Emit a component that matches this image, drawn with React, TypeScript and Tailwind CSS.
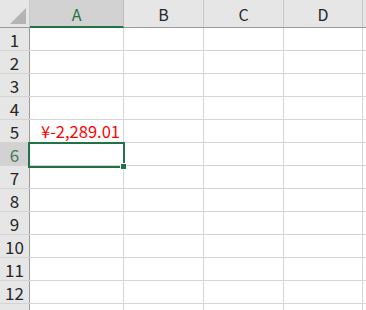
import React from "react";

const cols = [
  { label: "A", w: "w-[94px]", sel: true },
  { label: "B", w: "w-[80px]", sel: false },
  { label: "C", w: "w-[80px]", sel: false },
  { label: "D", w: "w-[79px]", sel: false },
];

const rows = Array.from({ length: 13 }, (_, i) => i + 1);

export default function App() {
  return (
    <div
      className="relative w-[366px] h-[310px] overflow-hidden bg-white"
      style={{ fontFamily: '"Noto Sans CJK SC", "Noto Sans", sans-serif' }}
    >
      {/* header row */}
      <div className="flex h-[28px] bg-[#e6e6e6] border-b border-[#9b9b9b]">
        <div className="w-[30px] shrink-0 border-r border-[#c8c8c8] relative">
          <svg className="absolute right-[3px] bottom-[3px]" width="16" height="16" viewBox="0 0 16 16">
            <polygon points="16,0 16,16 0,16" fill="#b4b4b4" />
          </svg>
        </div>
        {cols.map((c) => (
          <div
            key={c.label}
            className={`${c.w} shrink-0 flex items-center justify-center text-[16px] leading-none pt-[1px] border-r ${
              c.sel
                ? "bg-[#d2d2d2] text-[#217346] border-[#bdbdbd] border-b-[2px] border-b-[#217346] -mb-[1px]"
                : "text-[#262626] border-[#c8c8c8]"
            }`}
          >
            {c.label}
          </div>
        ))}
        <div className="flex-1" />
      </div>
      {rows.map((r) => (
        <div key={r} className="flex h-[23px] border-b border-[#d4d4d4]">
          <div
            className={`w-[30px] shrink-0 flex items-center justify-center text-[17px] leading-none border-r border-[#9b9b9b] ${
              r === 6 ? "bg-[#d2d2d2] text-[#3d7a5a]" : "bg-[#e6e6e6] text-[#262626]"
            }`}
          >
            {r <= 12 ? r : ""}
          </div>
          {cols.map((c) => (
            <div
              key={c.label}
              className={`${c.w} shrink-0 border-r border-[#d4d4d4] flex items-center justify-end pr-[3px] text-[16.5px] leading-none text-[#ff0000]`}
            >
              {r === 5 && c.label === "A" ? "¥-2,289.01" : ""}
            </div>
          ))}
          <div className="flex-1" />
        </div>
      ))}
      {/* selection box */}
      <div className="absolute left-[28px] top-[142px] w-[97px] h-[26px] border-2 border-[#217346]" />
      <div className="absolute left-[120px] top-[163px] w-[7px] h-[7px] bg-[#217346] border border-white" />
    </div>
  );
}
